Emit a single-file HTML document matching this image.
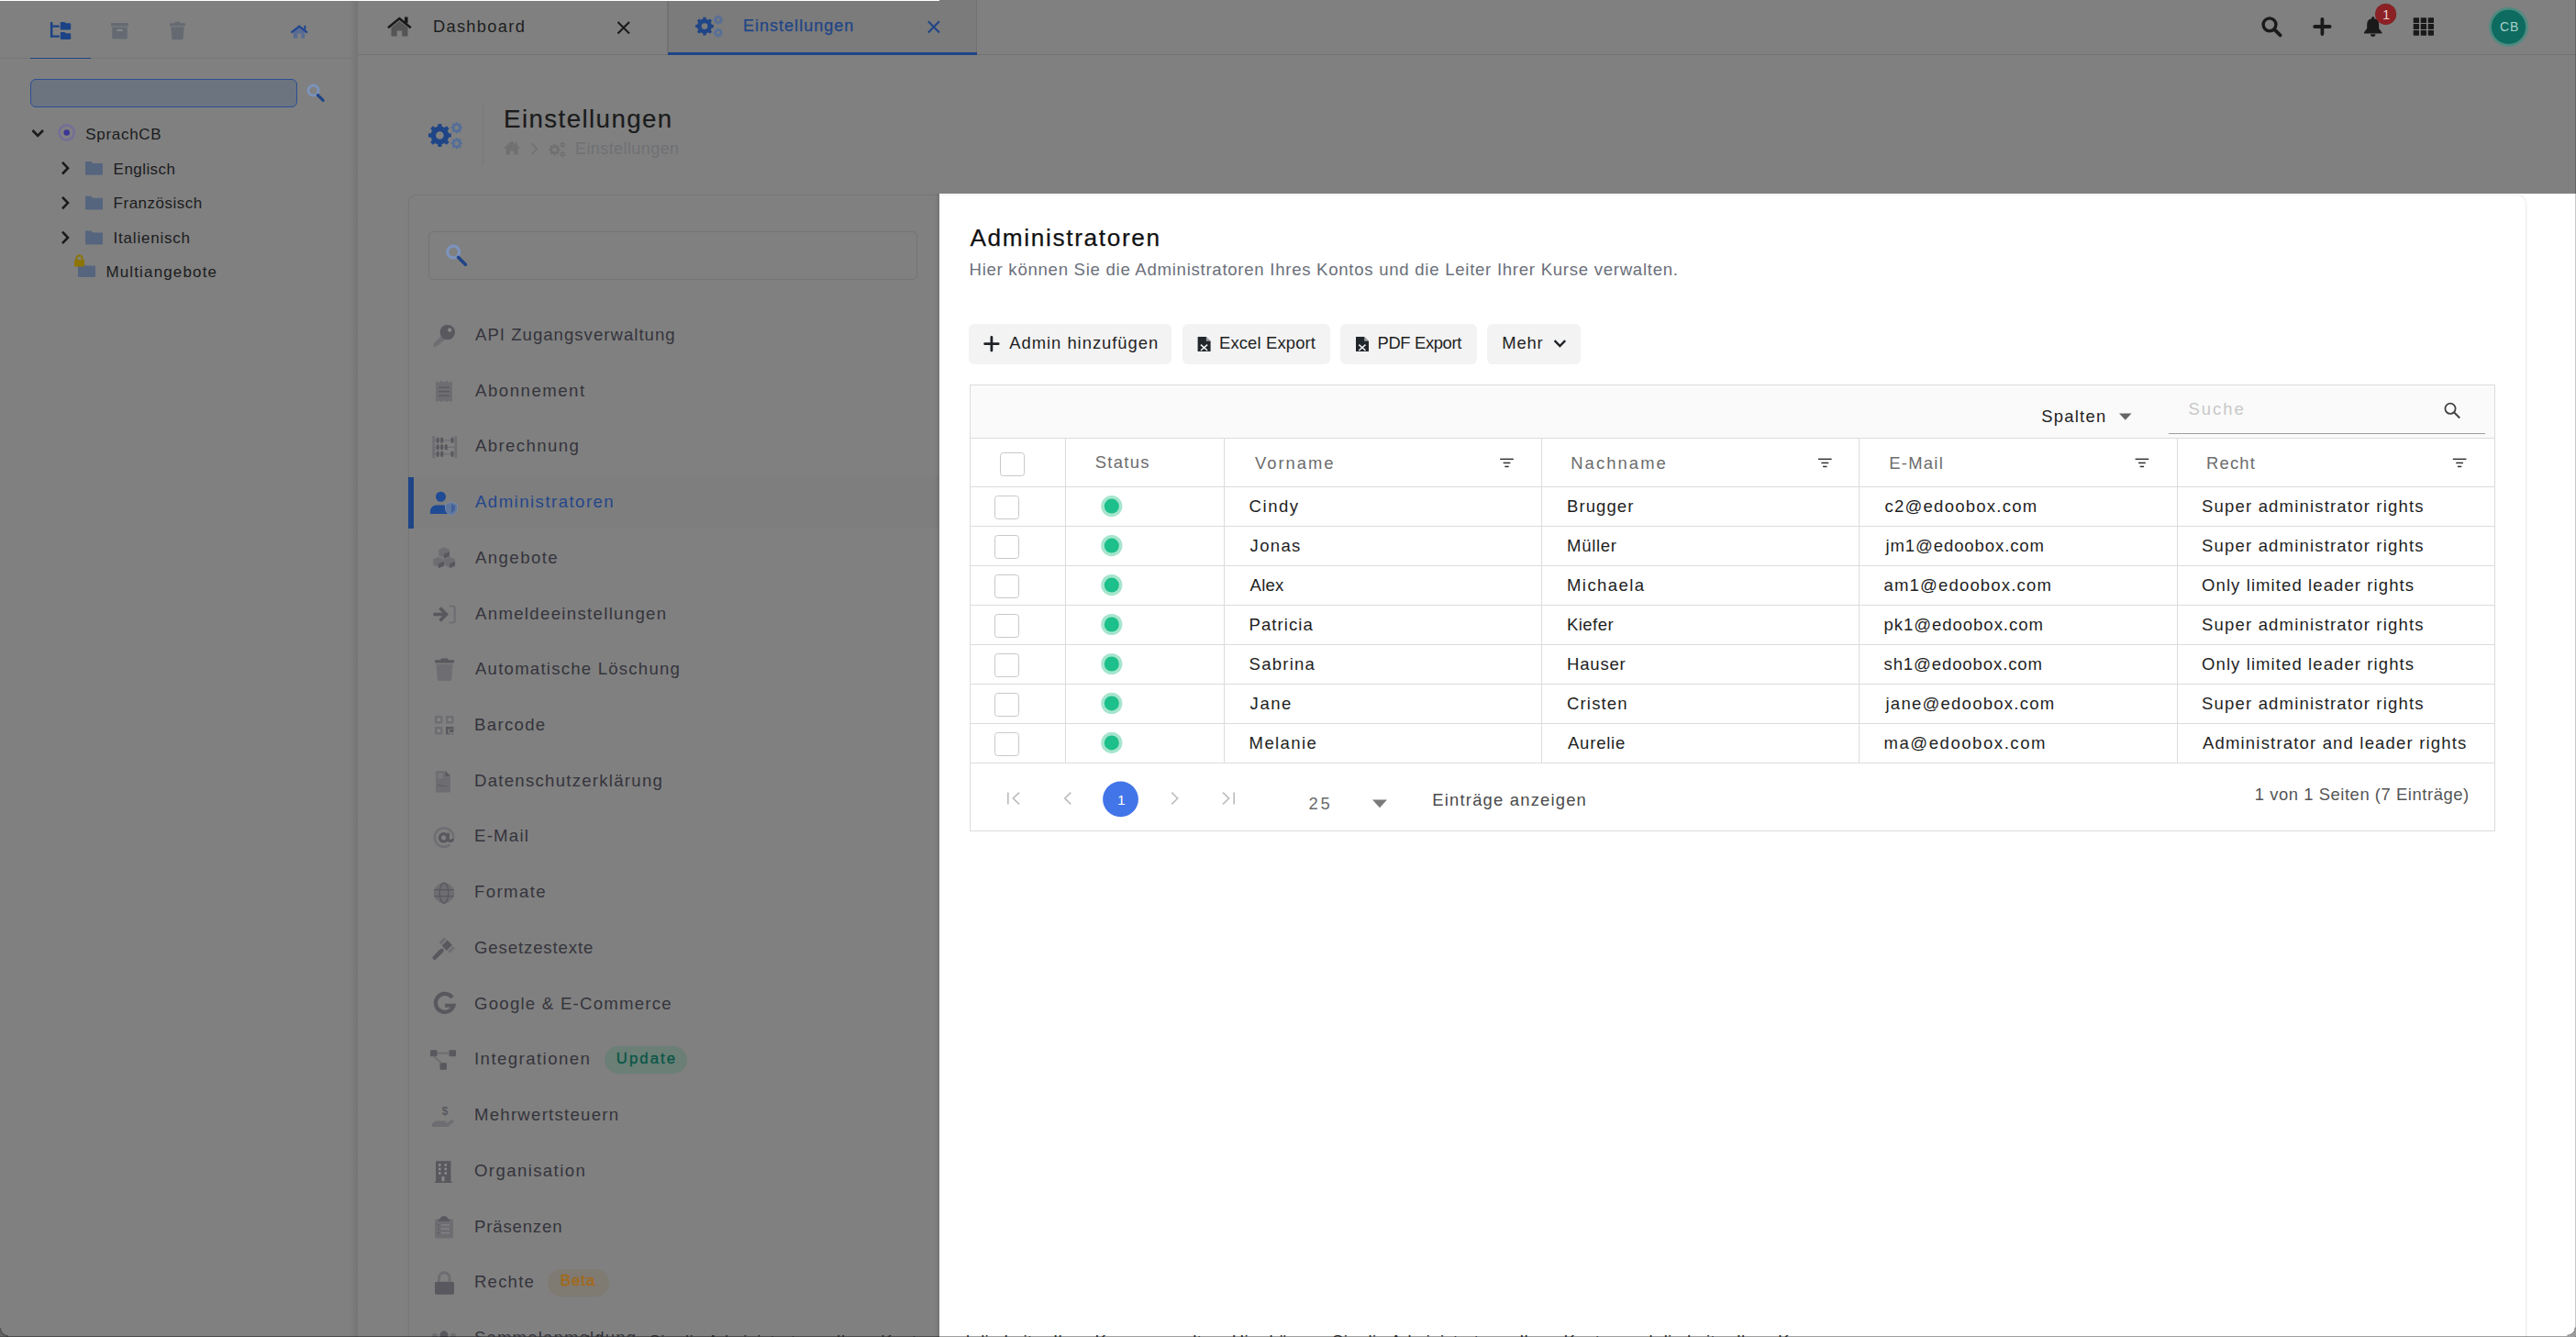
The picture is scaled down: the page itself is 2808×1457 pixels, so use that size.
<!DOCTYPE html>
<html><head><meta charset="utf-8"><style>
html,body{margin:0;padding:0;}
body{width:2808px;height:1457px;overflow:hidden;position:relative;background:#808080;font-family:"Liberation Sans", sans-serif;}
.t{position:absolute;white-space:nowrap;font-family:"Liberation Sans", sans-serif;}
svg{display:block;overflow:visible}
</style></head><body>
<div style='position:absolute;left:381px;top:0px;width:9px;height:1457px;background:linear-gradient(90deg,rgba(0,0,0,0),rgba(0,0,0,0.09))'></div><div style='position:absolute;left:0px;top:63px;width:390px;height:1px;background:#737778'></div><div style='position:absolute;left:33px;top:63px;width:66px;height:1px;background:#1f4585'></div><div style='position:absolute;left:390px;top:59px;width:2418px;height:1px;background:#727272'></div><div style='position:absolute;left:728px;top:0px;width:337px;height:57px;background:#7b7b7b;border-left:1px solid #727272;border-right:1px solid #727272;box-sizing:border-box'></div><div style='position:absolute;left:728px;top:57px;width:337px;height:3px;background:#1f4587'></div><svg style='position:absolute;left:0;top:0' width='2808' height='1457'><g fill='#1c4385'><rect x='54.9' y='23.9' width='2.5' height='16.9' rx='0.6'/><rect x='54.9' y='27.6' width='9.9' height='2.2' rx='0.6'/><rect x='54.9' y='38.5' width='9.9' height='2.2' rx='0.6'/><path d='M66.8,24 h3.6 l1.4,1.3 h4.4 a1,1 0 0 1 1,1 v5.1 a1,1 0 0 1 -1,1 h-9.4 a1,1 0 0 1 -1,-1 v-6.4 a1,1 0 0 1 1,-1z'/><path d='M66.8,35 h3.6 l1.4,1.3 h4.4 a1,1 0 0 1 1,1 v4.7 a1,1 0 0 1 -1,1 h-9.4 a1,1 0 0 1 -1,-1 v-6 a1,1 0 0 1 1,-1z'/></g></svg><svg style='position:absolute;left:0;top:0' width='2808' height='1457'><g fill='#656a72'><rect x='121' y='25' width='19' height='3.6' rx='0.8'/><path d='M122.2,29.6 h16.6 v11.6 a1.2,1.2 0 0 1 -1.2,1.2 h-14.2 a1.2,1.2 0 0 1 -1.2,-1.2z'/></g><rect x='127.5' y='32.2' width='6' height='1.6' fill='#8a8f96'/></svg><svg style='position:absolute;left:0;top:0' width='2808' height='1457'><g fill='#656a72'><rect x='185' y='25.3' width='17' height='3' rx='0.8'/><rect x='190.5' y='23.8' width='6' height='2' rx='0.8'/><path d='M186.3,29.2 h14.4 l-1,12.6 a1.6,1.6 0 0 1 -1.6,1.4 h-9.2 a1.6,1.6 0 0 1 -1.6,-1.4z'/></g></svg><svg style='position:absolute;left:0;top:0' width='2808' height='1457'><path fill='#586c93' d='M319.8,34.2 L326.1,29.4 L332.2,34.2 V41.8 H328.3 V36.6 H324.4 V41.8 H319.8Z'/><path d='M317.4,35.6 L326.2,28.6 L335,35.6' fill='none' stroke='#1f4590' stroke-width='2'/><rect x='331.4' y='27.8' width='2' height='4.6' fill='#1f4590'/></svg><div style='position:absolute;left:33px;top:86px;width:291px;height:31px;background:#6c7480;border:1.5px solid #2a4f94;border-radius:6px;box-sizing:border-box'></div><svg style='position:absolute;left:0;top:0' width='2808' height='1457'><circle cx='341.6' cy='98.6' r='5.6' fill='none' stroke='#7b93bd' stroke-width='2.8'/><path d='M346.4,103.6 L352.2,109.4' stroke='#1f4587' stroke-width='3.2' stroke-linecap='round'/></svg><svg style='position:absolute;left:0;top:0;pointer-events:none' width='2808' height='1457'><path d='M35.5,142 L41.2,147.8 L47,142' fill='none' stroke='#1a1a1a' stroke-width='2.6' /></svg><svg style='position:absolute;left:0;top:0' width='2808' height='1457'><circle cx='72.7' cy='144.5' r='8.1' fill='none' stroke='#766e96' stroke-width='2.6'/><circle cx='72.7' cy='144.5' r='3.3' fill='#3d3597'/></svg><svg style='position:absolute;left:0;top:0;pointer-events:none' width='2808' height='1457'><path d='M68,176.89999999999998 L74,183.2 L68,189.5' fill='none' stroke='#1a1a1a' stroke-width='2.6' /></svg><svg style='position:absolute;left:0;top:0' width='2808' height='1457'><path fill='#56657e' d='M93,175.89999999999998 h6.5 l2,2 h10.5 v11.8 a1,1 0 0 1 -1,1 h-17 a1,1 0 0 1 -1,-1z'/></svg><svg style='position:absolute;left:0;top:0;pointer-events:none' width='2808' height='1457'><path d='M68,214.79999999999998 L74,221.1 L68,227.4' fill='none' stroke='#1a1a1a' stroke-width='2.6' /></svg><svg style='position:absolute;left:0;top:0' width='2808' height='1457'><path fill='#56657e' d='M93,213.79999999999998 h6.5 l2,2 h10.5 v11.8 a1,1 0 0 1 -1,1 h-17 a1,1 0 0 1 -1,-1z'/></svg><svg style='position:absolute;left:0;top:0;pointer-events:none' width='2808' height='1457'><path d='M68,252.59999999999997 L74,258.9 L68,265.2' fill='none' stroke='#1a1a1a' stroke-width='2.6' /></svg><svg style='position:absolute;left:0;top:0' width='2808' height='1457'><path fill='#56657e' d='M93,251.59999999999997 h6.5 l2,2 h10.5 v11.8 a1,1 0 0 1 -1,1 h-17 a1,1 0 0 1 -1,-1z'/></svg><svg style='position:absolute;left:0;top:0' width='2808' height='1457'><path fill='#56657e' d='M85,287.6 h6.5 l2,2 h10.5 v11.4 a1,1 0 0 1 -1,1 h-17 a1,1 0 0 1 -1,-1z'/></svg><svg style='position:absolute;left:0;top:0' width='2808' height='1457'><rect x='81' y='283' width='11' height='7.5' rx='1' fill='#8c7400'/><path d='M83.3,283.5 v-1.8 a3.2,3.2 0 0 1 6.4,0 v1.8' fill='none' stroke='#8c7400' stroke-width='1.9'/></svg><svg style='position:absolute;left:0;top:0' width='2808' height='1457'><circle cx='2474' cy='26.8' r='6.9' fill='none' stroke='#1a1a1a' stroke-width='3.4'/><path d='M2479.5,32.3 L2485.6,38.4' stroke='#1a1a1a' stroke-width='3.8' stroke-linecap='round'/></svg><svg style='position:absolute;left:0;top:0' width='2808' height='1457'><path d='M2531.4,20.8 V37.1 M2523.2,29 H2539.6' stroke='#1a1a1a' stroke-width='3.8' stroke-linecap='round'/></svg><svg style='position:absolute;left:0;top:0' width='2808' height='1457'><path fill='#1a1a1a' d='M2586.7,18 a1.5,1.5 0 0 1 1.5,1.5 v0.8 a6.2,6.2 0 0 1 5,6.1 v4.5 l3.2,4.3 v1.2 h-19.4 v-1.2 l3.2,-4.3 v-4.5 a6.2,6.2 0 0 1 5,-6.1 v-0.8 a1.5,1.5 0 0 1 1.5,-1.5z M2584,37.2 h5.4 a2.7,2.7 0 0 1 -5.4,0z'/></svg><svg style='position:absolute;left:0;top:0' width='2808' height='1457'><circle cx='2600.6' cy='15.4' r='11.5' fill='#8c2125'/><circle cx='2600.6' cy='15.4' r='11.5' fill='none' stroke='rgba(0,0,0,0.08)' stroke-width='1'/></svg><svg style='position:absolute;left:0;top:0' width='2808' height='1457'><g fill='#1a1a1a'><rect x='2630.7' y='19.3' width='6.3' height='5.8' rx='0.6'/><rect x='2630.7' y='26.1' width='6.3' height='5.8' rx='0.6'/><rect x='2630.7' y='32.9' width='6.3' height='5.8' rx='0.6'/><rect x='2638.7' y='19.3' width='6.3' height='5.8' rx='0.6'/><rect x='2638.7' y='26.1' width='6.3' height='5.8' rx='0.6'/><rect x='2638.7' y='32.9' width='6.3' height='5.8' rx='0.6'/><rect x='2646.7' y='19.3' width='6.3' height='5.8' rx='0.6'/><rect x='2646.7' y='26.1' width='6.3' height='5.8' rx='0.6'/><rect x='2646.7' y='32.9' width='6.3' height='5.8' rx='0.6'/></g></svg><svg style='position:absolute;left:0;top:0' width='2808' height='1457'><circle cx='2734.5' cy='29.3' r='21.5' fill='#4f8a81'/><circle cx='2734.5' cy='29.3' r='18.6' fill='#0d6b5f'/></svg><svg style='position:absolute;left:0;top:0' width='2808' height='1457'><path fill='#555' d='M426.5,30 L435.4,23 L444.5,30 V39.6 H438.2 V33.5 H432.7 V39.6 H426.5Z'/><path d='M423,30.3 L435.4,20.2 L447.8,30.3' fill='none' stroke='#1a1a1a' stroke-width='2.6'/><rect x='441' y='18.5' width='3.6' height='6.5' fill='#1a1a1a'/></svg><svg style='position:absolute;left:0;top:0;pointer-events:none' width='2808' height='1457'><path d='M673.5,24 L686,36.5 M686,24 L673.5,36.5' fill='none' stroke='#1a1a1a' stroke-width='2.1' /></svg><div style='position:absolute;left:727px;top:0px;width:1px;height:57px;background:#747474'></div><svg style='position:absolute;left:0;top:0' width='2808' height='1457'><path fill-rule='evenodd' fill='#1f4587' d='M766.25,20.79 L766.44,18.72 L769.56,18.72 L769.75,20.79 L772.29,21.85 L773.88,20.51 L776.09,22.72 L774.75,24.31 L775.81,26.85 L777.88,27.04 L777.88,30.16 L775.81,30.35 L774.75,32.89 L776.09,34.48 L773.88,36.69 L772.29,35.35 L769.75,36.41 L769.56,38.48 L766.44,38.48 L766.25,36.41 L763.71,35.35 L762.12,36.69 L759.91,34.48 L761.25,32.89 L760.19,30.35 L758.12,30.16 L758.12,27.04 L760.19,26.85 L761.25,24.31 L759.91,22.72 L762.12,20.51 L763.71,21.85Z M771.40,28.60 A3.4,3.4 0 1,0 764.60,28.60 A3.4,3.4 0 1,0 771.40,28.60Z'/></svg><svg style='position:absolute;left:0;top:0' width='2808' height='1457'><path fill-rule='evenodd' fill='#556e98' d='M782.01,17.60 L782.09,16.46 L783.71,16.46 L783.79,17.60 L785.10,18.14 L785.96,17.39 L787.11,18.54 L786.36,19.40 L786.90,20.71 L788.04,20.79 L788.04,22.41 L786.90,22.49 L786.36,23.80 L787.11,24.66 L785.96,25.81 L785.10,25.06 L783.79,25.60 L783.71,26.74 L782.09,26.74 L782.01,25.60 L780.70,25.06 L779.84,25.81 L778.69,24.66 L779.44,23.80 L778.90,22.49 L777.76,22.41 L777.76,20.79 L778.90,20.71 L779.44,19.40 L778.69,18.54 L779.84,17.39 L780.70,18.14Z M784.70,21.60 A1.8,1.8 0 1,0 781.10,21.60 A1.8,1.8 0 1,0 784.70,21.60Z'/></svg><svg style='position:absolute;left:0;top:0' width='2808' height='1457'><path fill-rule='evenodd' fill='#556e98' d='M782.01,31.60 L782.09,30.46 L783.71,30.46 L783.79,31.60 L785.10,32.14 L785.96,31.39 L787.11,32.54 L786.36,33.40 L786.90,34.71 L788.04,34.79 L788.04,36.41 L786.90,36.49 L786.36,37.80 L787.11,38.66 L785.96,39.81 L785.10,39.06 L783.79,39.60 L783.71,40.74 L782.09,40.74 L782.01,39.60 L780.70,39.06 L779.84,39.81 L778.69,38.66 L779.44,37.80 L778.90,36.49 L777.76,36.41 L777.76,34.79 L778.90,34.71 L779.44,33.40 L778.69,32.54 L779.84,31.39 L780.70,32.14Z M784.70,35.60 A1.8,1.8 0 1,0 781.10,35.60 A1.8,1.8 0 1,0 784.70,35.60Z'/></svg><svg style='position:absolute;left:0;top:0;pointer-events:none' width='2808' height='1457'><path d='M1011.8,23.2 L1024,35.4 M1024,23.2 L1011.8,35.4' fill='none' stroke='#1f4587' stroke-width='2.1' /></svg><svg style='position:absolute;left:0;top:0' width='2808' height='1457'><path fill-rule='evenodd' fill='#1f4587' d='M477.22,137.74 L477.43,135.06 L481.37,135.06 L481.58,137.74 L484.76,139.06 L486.81,137.31 L489.59,140.09 L487.84,142.14 L489.16,145.32 L491.84,145.53 L491.84,149.47 L489.16,149.68 L487.84,152.86 L489.59,154.91 L486.81,157.69 L484.76,155.94 L481.58,157.26 L481.37,159.94 L477.43,159.94 L477.22,157.26 L474.04,155.94 L471.99,157.69 L469.21,154.91 L470.96,152.86 L469.64,149.68 L466.96,149.47 L466.96,145.53 L469.64,145.32 L470.96,142.14 L469.21,140.09 L471.99,137.31 L474.04,139.06Z M483.70,147.50 A4.3,4.3 0 1,0 475.10,147.50 A4.3,4.3 0 1,0 483.70,147.50Z'/></svg><svg style='position:absolute;left:0;top:0' width='2808' height='1457'><path fill-rule='evenodd' fill='#556e98' d='M496.71,134.32 L496.80,132.88 L498.80,132.88 L498.89,134.32 L500.48,134.98 L501.56,134.02 L502.98,135.44 L502.02,136.52 L502.68,138.11 L504.12,138.20 L504.12,140.20 L502.68,140.29 L502.02,141.88 L502.98,142.96 L501.56,144.38 L500.48,143.42 L498.89,144.08 L498.80,145.52 L496.80,145.52 L496.71,144.08 L495.12,143.42 L494.04,144.38 L492.62,142.96 L493.58,141.88 L492.92,140.29 L491.48,140.20 L491.48,138.20 L492.92,138.11 L493.58,136.52 L492.62,135.44 L494.04,134.02 L495.12,134.98Z M500.00,139.20 A2.2,2.2 0 1,0 495.60,139.20 A2.2,2.2 0 1,0 500.00,139.20Z'/></svg><svg style='position:absolute;left:0;top:0' width='2808' height='1457'><path fill-rule='evenodd' fill='#556e98' d='M496.71,151.32 L496.80,149.88 L498.80,149.88 L498.89,151.32 L500.48,151.98 L501.56,151.02 L502.98,152.44 L502.02,153.52 L502.68,155.11 L504.12,155.20 L504.12,157.20 L502.68,157.29 L502.02,158.88 L502.98,159.96 L501.56,161.38 L500.48,160.42 L498.89,161.08 L498.80,162.52 L496.80,162.52 L496.71,161.08 L495.12,160.42 L494.04,161.38 L492.62,159.96 L493.58,158.88 L492.92,157.29 L491.48,157.20 L491.48,155.20 L492.92,155.11 L493.58,153.52 L492.62,152.44 L494.04,151.02 L495.12,151.98Z M500.00,156.20 A2.2,2.2 0 1,0 495.60,156.20 A2.2,2.2 0 1,0 500.00,156.20Z'/></svg><div style='position:absolute;left:526px;top:115px;width:1px;height:65px;background:#76797c'></div><svg style='position:absolute;left:0;top:0' width='2808' height='1457'><path fill='#707070' d='M551.5,161 L558,156 L564.5,161 V168.6 H560 V164.5 H556 V168.6 H551.5Z'/><path d='M549.6,161.6 L558,155 L566.2,161.6' fill='none' stroke='#707070' stroke-width='1.8'/><rect x='562' y='154.8' width='1.8' height='4' fill='#707070'/></svg><svg style='position:absolute;left:0;top:0;pointer-events:none' width='2808' height='1457'><path d='M579.5,156.2 L585.2,162.2 L579.5,168.2' fill='none' stroke='#707070' stroke-width='1.6' /></svg><svg style='position:absolute;left:0;top:0' width='2808' height='1457'><path fill-rule='evenodd' fill='#707070' d='M603.41,158.32 L603.51,156.98 L605.49,156.98 L605.59,158.32 L607.18,158.98 L608.20,158.10 L609.60,159.50 L608.72,160.52 L609.38,162.11 L610.72,162.21 L610.72,164.19 L609.38,164.29 L608.72,165.88 L609.60,166.90 L608.20,168.30 L607.18,167.42 L605.59,168.08 L605.49,169.42 L603.51,169.42 L603.41,168.08 L601.82,167.42 L600.80,168.30 L599.40,166.90 L600.28,165.88 L599.62,164.29 L598.28,164.19 L598.28,162.21 L599.62,162.11 L600.28,160.52 L599.40,159.50 L600.80,158.10 L601.82,158.98Z M606.80,163.20 A2.3,2.3 0 1,0 602.20,163.20 A2.3,2.3 0 1,0 606.80,163.20Z'/></svg><svg style='position:absolute;left:0;top:0' width='2808' height='1457'><path fill-rule='evenodd' fill='#707070' d='M612.64,155.60 L612.63,154.67 L613.97,154.67 L613.96,155.60 L614.87,156.12 L615.68,155.66 L616.34,156.81 L615.54,157.27 L615.54,158.33 L616.34,158.79 L615.68,159.94 L614.87,159.48 L613.96,160.00 L613.97,160.93 L612.63,160.93 L612.64,160.00 L611.73,159.48 L610.92,159.94 L610.26,158.79 L611.06,158.33 L611.06,157.27 L610.26,156.81 L610.92,155.66 L611.73,156.12Z M614.30,157.80 A1.0,1.0 0 1,0 612.30,157.80 A1.0,1.0 0 1,0 614.30,157.80Z'/></svg><svg style='position:absolute;left:0;top:0' width='2808' height='1457'><path fill-rule='evenodd' fill='#707070' d='M612.64,165.80 L612.63,164.87 L613.97,164.87 L613.96,165.80 L614.87,166.32 L615.68,165.86 L616.34,167.01 L615.54,167.47 L615.54,168.53 L616.34,168.99 L615.68,170.14 L614.87,169.68 L613.96,170.20 L613.97,171.13 L612.63,171.13 L612.64,170.20 L611.73,169.68 L610.92,170.14 L610.26,168.99 L611.06,168.53 L611.06,167.47 L610.26,167.01 L610.92,165.86 L611.73,166.32Z M614.30,168.00 A1.0,1.0 0 1,0 612.30,168.00 A1.0,1.0 0 1,0 614.30,168.00Z'/></svg><div style='position:absolute;left:444.5px;top:212px;width:700px;height:1400px;border:1px solid #777;border-radius:9px;box-sizing:border-box;box-shadow:0 0 3px rgba(0,0,0,0.03)'></div><div style='position:absolute;left:467px;top:252px;width:533px;height:53px;border:1px solid #747474;border-radius:5px;box-sizing:border-box'></div><svg style='position:absolute;left:0;top:0' width='2808' height='1457'><circle cx='494.2' cy='274.6' r='6.4' fill='none' stroke='#7b93bd' stroke-width='3.2'/><path d='M499.6,280.4 L507.4,288.2' stroke='#1f4587' stroke-width='3.6' stroke-linecap='round'/></svg><div style='position:absolute;left:451px;top:520px;width:573px;height:56px;background:rgba(0,0,0,0.012)'></div><div style='position:absolute;left:445px;top:520px;width:6px;height:56px;background:#1f4587'></div><div style='position:absolute;left:659px;top:1140px;width:90px;height:30px;border-radius:15px;background:#6b7f76'></div><div style='position:absolute;left:597px;top:1383px;width:67px;height:30px;border-radius:15px;background:#7f7a72'></div><svg style='position:absolute;left:0;top:0' width='2808' height='1457'><path fill='#6e6e72' d='M472.5,374.4 L481.5,365.4 L485.5,369.4 L482.5,372.4 h-2 v2 h-2 v2 h-2.5 l-1.5,1.5 h-2z'/><circle cx='487.8' cy='362.09999999999997' r='8.2' fill='#58585e'/><circle cx='490.2' cy='359.7' r='2.1' fill='#8a8a8c'/></svg><svg style='position:absolute;left:0;top:0' width='2808' height='1457'><path fill='#6e6e72' d='M475,414.81999999999994 l3,2 l3,-2 l3,2 l3,-2 l3,2 l3,-2 v23.6 l-3,-2 l-3,2 l-3,-2 l-3,2 l-3,-2 l-3,2z'/><g stroke='#58585e' stroke-width='1.3'><path d='M478,422.11999999999995 h12 M478,426.61999999999995 h12 M478,431.11999999999995 h12'/></g></svg><svg style='position:absolute;left:0;top:0' width='2808' height='1457'><g fill='#6e6e72'><rect x='471.3' y='475.34' width='2.8' height='24' rx='1'/><rect x='495.4' y='475.34' width='2.8' height='24' rx='1'/></g><g stroke='#6e6e72' stroke-width='1.3'><path d='M474,479.84 h21.4 M474,487.34 h21.4 M474,494.84 h21.4'/></g><g fill='#58585e'><rect x='475.7' y='476.84' width='2.9' height='6' rx='1.2'/><rect x='480.2' y='476.84' width='2.9' height='6' rx='1.2'/><rect x='491.5' y='476.84' width='2.9' height='6' rx='1.2'/><rect x='475.7' y='484.34' width='2.9' height='6' rx='1.2'/><rect x='480.2' y='484.34' width='2.9' height='6' rx='1.2'/><rect x='484.8' y='484.34' width='2.9' height='6' rx='1.2'/><rect x='475.7' y='491.84' width='2.9' height='6' rx='1.2'/><rect x='480.2' y='491.84' width='2.9' height='6' rx='1.2'/><rect x='491.5' y='491.84' width='2.9' height='6' rx='1.2'/></g></svg><svg style='position:absolute;left:0;top:0' width='2808' height='1457'><circle cx='480.5' cy='541.2600000000001' r='5.5' fill='#1f4a94'/><path fill='#1f4a94' d='M469,560.0600000000001 v-3 a6.5,6.5 0 0 1 6.5,-6.5 h10 a6,6 0 0 1 3,0.8 v8.7z'/><path fill='#5f769e' stroke='#7f8ea8' stroke-width='0.8' d='M492,547.0600000000001 l6.5,2.5 v4.5 c0,4 -3,6.5 -6.5,8 c-3.5,-1.5 -6.5,-4 -6.5,-8 v-4.5z'/><path fill='#1f4a94' d='M492,549.5600000000001 l3.8,1.5 v2.8 c0,2.4 -1.8,3.9 -3.8,4.8z' opacity='0.5'/></svg><svg style='position:absolute;left:0;top:0' width='2808' height='1457'><g fill='#6e6e72' stroke='#7a7a7c' stroke-width='0.6'><path d='M478,598.78 l6,-2.5 l6,2.5 v6.5 l-6,2.5 l-6,-2.5z'/><path d='M472,609.28 l6,-2.5 l6,2.5 v6.5 l-6,2.5 l-6,-2.5z'/><path d='M484,609.28 l6,-2.5 l6,2.5 v6.5 l-6,2.5 l-6,-2.5z'/></g><g fill='#58585e'><path d='M484,603.78 l6,-2.5 v5 l-6,2.5z'/><path d='M478,614.28 l6,-2.5 v5 l-6,2.5z'/><path d='M490,614.28 l6,-2.5 v5 l-6,2.5z'/></g></svg><svg style='position:absolute;left:0;top:0' width='2808' height='1457'><path d='M472.5,669.5 h12.5' stroke='#58585e' stroke-width='3.6'/><path d='M479.5,662.5 l7,7 l-7,7' fill='none' stroke='#58585e' stroke-width='3.6'/><path d='M489.5,660.5 h4 a2.2,2.2 0 0 1 2.2,2.2 v13.6 a2.2,2.2 0 0 1 -2.2,2.2 h-4' fill='none' stroke='#6e6e72' stroke-width='2.2'/></svg><svg style='position:absolute;left:0;top:0' width='2808' height='1457'><g fill='#58585e'><rect x='474' y='719.22' width='21' height='3.4' rx='1'/><rect x='480.5' y='717.62' width='8' height='2.2' rx='0.8'/></g><path fill='#6e6e72' d='M475.5,723.72 h18 l-1.3,16.5 a2,2 0 0 1 -2,1.8 h-11.4 a2,2 0 0 1 -2,-1.8z'/></svg><svg style='position:absolute;left:0;top:0' width='2808' height='1457'><g fill='#6e6e72'><rect x='474' y='779.94' width='8.5' height='8.5'/><rect x='486' y='779.94' width='8.5' height='8.5'/><rect x='474' y='791.94' width='8.5' height='8.5'/></g><g fill='#858587'><rect x='476.5' y='782.44' width='3.5' height='3.5'/><rect x='488.5' y='782.44' width='3.5' height='3.5'/><rect x='476.5' y='794.44' width='3.5' height='3.5'/></g><g fill='#58585e'><rect x='486' y='791.94' width='2.5' height='8.5'/><rect x='486' y='791.94' width='8.5' height='2.5'/><rect x='490' y='794.94' width='4.5' height='3'/><rect x='489' y='798.94' width='1.5' height='1.5'/><rect x='492.5' y='798.94' width='1.5' height='1.5'/></g></svg><svg style='position:absolute;left:0;top:0' width='2808' height='1457'><path fill='#6e6e72' d='M475,840.3600000000001 h10.5 l5.5,5.5 v16.5 a1.2,1.2 0 0 1 -1.2,1.2 h-14.8 z'/><path fill='#58585e' d='M485.5,840.3600000000001 l5.5,5.5 h-5.5z'/><g stroke='#858587' stroke-width='1.1'><path d='M477.5,844.1600000000001 h5 M477.5,847.1600000000001 h5'/></g><path d='M477,856.6600000000001 l2,-2 l1.5,2.2 l1.5,-1.2 l1.2,1 h4' fill='none' stroke='#58585e' stroke-width='1'/></svg><svg style='position:absolute;left:0;top:0' width='2808' height='1457'><path d='M490.5,920.5800000000002 A10.2,10.2 0 1 1 494.2,913.8800000000001' fill='none' stroke='#6e6e72' stroke-width='2.6'/><circle cx='483.6' cy='912.7800000000001' r='4.2' fill='none' stroke='#58585e' stroke-width='3.2'/><path d='M488.6,907.7800000000001 v6.2 a2.5,2.5 0 0 0 5,0' fill='none' stroke='#58585e' stroke-width='2.8'/></svg><svg style='position:absolute;left:0;top:0' width='2808' height='1457'><circle cx='484' cy='973.1000000000001' r='11.2' fill='#6e6e72'/><g fill='none' stroke='#58585e' stroke-width='1.4'><ellipse cx='484' cy='973.1000000000001' rx='4.8' ry='11'/><path d='M473,969.6000000000001 h22 M473,976.6000000000001 h22'/></g></svg><svg style='position:absolute;left:0;top:0' width='2808' height='1457'><path d='M473.8,1043.62 L481.5,1035.9199999999998' stroke='#58585e' stroke-width='4.6' stroke-linecap='round'/><path fill='#58585e' d='M481.54,1030.57 L487.55,1024.56 L492.86,1029.87 L486.85,1035.88Z'/><path fill='#6e6e72' d='M478.44,1027.12 L484.10,1021.46 L486.36,1023.72 L480.70,1029.38Z M488.04,1036.72 L493.70,1031.06 L495.96,1033.32 L490.30,1038.98Z'/></svg><svg style='position:absolute;left:0;top:0' width='2808' height='1457'><path d='M493,1087.04 A10,10 0 1 0 494.5,1095.74 H485' fill='none' stroke='#58585e' stroke-width='4.2'/></svg><svg style='position:absolute;left:0;top:0' width='2808' height='1457'><g fill='#58585e'><rect x='469' y='1144.26' width='7.5' height='7' rx='1'/><rect x='489.5' y='1144.26' width='7.5' height='7' rx='1'/><rect x='479.5' y='1158.26' width='7.5' height='7.5' rx='1'/></g><path d='M476.5,1147.76 h13 M473,1151.26 L481,1158.26' stroke='#6e6e72' stroke-width='2'/></svg><svg style='position:absolute;left:0;top:0' width='2808' height='1457'><text x='485' y='1215.48' font-family='Liberation Sans' font-weight='700' font-size='12' fill='#58585e' text-anchor='middle'>$</text><path fill='#6e6e72' d='M471,1224.48 c3,-3 6,-3.5 9,-3 h5 a1.5,1.5 0 0 1 0,3 h-4 h5 l6,-4 a1.8,1.8 0 0 1 2.2,2.6 l-6,5 h-17z'/></svg><svg style='position:absolute;left:0;top:0' width='2808' height='1457'><path fill='#58585e' d='M475,1265.2 h16.5 v22.5 h1.2 v1.3 h-19 v-1.3 h1.3z'/><rect x='478' y='1268.2' width='2.6' height='2.6' fill='#8a8a8c'/><rect x='478' y='1272.7' width='2.6' height='2.6' fill='#8a8a8c'/><rect x='478' y='1277.2' width='2.6' height='2.6' fill='#8a8a8c'/><rect x='484.5' y='1268.2' width='2.6' height='2.6' fill='#8a8a8c'/><rect x='484.5' y='1272.7' width='2.6' height='2.6' fill='#8a8a8c'/><rect x='484.5' y='1277.2' width='2.6' height='2.6' fill='#8a8a8c'/><rect x='481.5' y='1282.2' width='3' height='5' fill='#8a8a8c'/></svg><svg style='position:absolute;left:0;top:0' width='2808' height='1457'><path fill='#6e6e72' d='M475.5,1328.42 h17 a1.5,1.5 0 0 1 1.5,1.5 v18 a1.5,1.5 0 0 1 -1.5,1.5 h-17 a1.5,1.5 0 0 1 -1.5,-1.5 v-18 a1.5,1.5 0 0 1 1.5,-1.5z'/><path fill='#58585e' d='M480,1328.42 a4,3.2 0 0 1 8,0 h2 v2.5 h-12 v-2.5z'/><g stroke='#858587' stroke-width='1.3'><path d='M481,1334.92 h9 M481,1339.22 h9 M481,1343.6200000000001 h9'/></g><g fill='#555'><circle cx='477.8' cy='1334.92' r='0.8'/><circle cx='477.8' cy='1339.22' r='0.8'/><circle cx='477.8' cy='1343.6200000000001' r='0.8'/></g></svg><svg style='position:absolute;left:0;top:0' width='2808' height='1457'><rect x='474' y='1396.64' width='21' height='14' rx='2' fill='#58585e'/><path d='M478.5,1396.64 v-4 a5.8,5.8 0 0 1 11.6,0 v4' fill='none' stroke='#6e6e72' stroke-width='3'/></svg><svg style='position:absolute;left:0;top:0' width='2808' height='1457'><circle cx='484' cy='1454.8600000000001' r='4.5' fill='#58585e'/><circle cx='474' cy='1455.8600000000001' r='3' fill='#6e6e72'/><circle cx='494' cy='1455.8600000000001' r='3' fill='#6e6e72'/></svg><svg style='position:absolute;left:0;top:0' width='2808' height='1457'><path d='M0,1447 A9,9 0 0 0 9,1456 H0Z' fill='#686868'/><path d='M0,1447 A9,9 0 0 0 9,1456' fill='none' stroke='#525252' stroke-width='1.6'/></svg><div style='position:absolute;left:1019px;top:211px;width:5px;height:1246px;background:linear-gradient(90deg,rgba(0,0,0,0),rgba(0,0,0,0.10))'></div><div style='position:absolute;left:1024px;top:211px;width:1784px;height:1246px;background:#fff'></div><div style='position:absolute;left:1024px;top:212px;width:1730px;height:1400px;border:1px solid #efefef;border-left:none;border-radius:0 10px 0 0;box-sizing:border-box;box-shadow:1px 0 2px rgba(0,0,0,0.03)'></div><div style='position:absolute;left:1024px;top:211px;width:1px;height:1246px;background:#fff'></div><div style='position:absolute;left:2807px;top:0px;width:1px;height:1457px;background:rgba(0,0,0,0.22)'></div><div style='position:absolute;left:1056.2px;top:353px;width:221.3px;height:44px;background:#f3f3f3;border-radius:6px'></div><div style='position:absolute;left:1288.9px;top:353px;width:161.1px;height:44px;background:#f3f3f3;border-radius:6px'></div><div style='position:absolute;left:1461.2px;top:353px;width:148.4px;height:44px;background:#f3f3f3;border-radius:6px'></div><div style='position:absolute;left:1621.3px;top:353px;width:101.3px;height:44px;background:#f3f3f3;border-radius:6px'></div><svg style='position:absolute;left:0;top:0' width='2808' height='1457'><path d='M1080.9,367.5 V382 M1073.6,374.7 H1088.2' stroke='#1f2328' stroke-width='2.8' stroke-linecap='round'/></svg><svg style='position:absolute;left:0;top:0' width='2808' height='1457'><path fill='#22272c' d='M1305.6,367 h9.2 l4.8,4.8 v11.2 h-14z'/><path fill='#f3f3f3' d='M1314.8,367 v4.8 h4.8' opacity='0.6'/><path d='M1308.8999999999999,375.6 l7.2,6.4 M1316.1,375.6 l-7.2,6.4' stroke='#f3f3f3' stroke-width='1.5'/></svg><svg style='position:absolute;left:0;top:0' width='2808' height='1457'><path fill='#22272c' d='M1478,367 h9.2 l4.8,4.8 v11.2 h-14z'/><path fill='#f3f3f3' d='M1487.2,367 v4.8 h4.8' opacity='0.6'/><path d='M1481.3,375.6 l7.2,6.4 M1488.5,375.6 l-7.2,6.4' stroke='#f3f3f3' stroke-width='1.5'/></svg><svg style='position:absolute;left:0;top:0;pointer-events:none' width='2808' height='1457'><path d='M1694.6,371.2 L1700.4,377 L1706.2,371.2' fill='none' stroke='#1f2328' stroke-width='2.4' /></svg><div style='position:absolute;left:1056.5px;top:419px;width:1663.0px;height:486.5px;border:1px solid #dcdcdc;box-sizing:border-box'></div><div style='position:absolute;left:1057.5px;top:420px;width:1661.0px;height:57.5px;background:#fafafa'></div><div style='position:absolute;left:1056.5px;top:477px;width:1663.0px;height:1px;background:#dcdcdc'></div><svg style='position:absolute;left:0;top:0' width='2808' height='1457'><path d='M2310,450.5 h13.5 l-6.75,7.2z' fill='#666'/></svg><div style='position:absolute;left:2364.3px;top:471.8px;width:344.4px;height:1.2px;background:#9e9e9e'></div><svg style='position:absolute;left:0;top:0' width='2808' height='1457'><circle cx='2671' cy='445.3' r='5.6' fill='none' stroke='#444' stroke-width='1.8'/><path d='M2675,449.3 L2681.2,455.5' stroke='#444' stroke-width='2'/></svg><div style='position:absolute;left:1161px;top:477px;width:1px;height:354.3px;background:#dcdcdc'></div><div style='position:absolute;left:1334px;top:477px;width:1px;height:354.3px;background:#dcdcdc'></div><div style='position:absolute;left:1680px;top:477px;width:1px;height:354.3px;background:#dcdcdc'></div><div style='position:absolute;left:2026px;top:477px;width:1px;height:354.3px;background:#dcdcdc'></div><div style='position:absolute;left:2373px;top:477px;width:1px;height:354.3px;background:#dcdcdc'></div><div style='position:absolute;left:1056.5px;top:530px;width:1663.0px;height:1px;background:#dcdcdc'></div><div style='position:absolute;left:1056.5px;top:573px;width:1663.0px;height:1px;background:#dcdcdc'></div><div style='position:absolute;left:1056.5px;top:616px;width:1663.0px;height:1px;background:#dcdcdc'></div><div style='position:absolute;left:1056.5px;top:659px;width:1663.0px;height:1px;background:#dcdcdc'></div><div style='position:absolute;left:1056.5px;top:702px;width:1663.0px;height:1px;background:#dcdcdc'></div><div style='position:absolute;left:1056.5px;top:745px;width:1663.0px;height:1px;background:#dcdcdc'></div><div style='position:absolute;left:1056.5px;top:788px;width:1663.0px;height:1px;background:#dcdcdc'></div><div style='position:absolute;left:1056.5px;top:831px;width:1663.0px;height:1px;background:#dcdcdc'></div><div style='position:absolute;left:1090.3px;top:493.2px;width:26.3px;height:26.3px;border:1.2px solid #c8c8c8;border-radius:3.5px;box-sizing:border-box;background:#fff'></div><svg style='position:absolute;left:0;top:0' width='2808' height='1457'><g fill='#333'><rect x='1635.2' y='499.6' width='14.6' height='1.5'/><rect x='1638.6000000000001' y='503.7' width='7.8' height='1.5'/><rect x='1640.3' y='507.7' width='4.4' height='1.5'/></g></svg><svg style='position:absolute;left:0;top:0' width='2808' height='1457'><g fill='#333'><rect x='1982' y='499.6' width='14.6' height='1.5'/><rect x='1985.4' y='503.7' width='7.8' height='1.5'/><rect x='1987.1' y='507.7' width='4.4' height='1.5'/></g></svg><svg style='position:absolute;left:0;top:0' width='2808' height='1457'><g fill='#333'><rect x='2327.6' y='499.6' width='14.6' height='1.5'/><rect x='2331.0' y='503.7' width='7.8' height='1.5'/><rect x='2332.7' y='507.7' width='4.4' height='1.5'/></g></svg><svg style='position:absolute;left:0;top:0' width='2808' height='1457'><g fill='#333'><rect x='2673.8' y='499.6' width='14.6' height='1.5'/><rect x='2677.2000000000003' y='503.7' width='7.8' height='1.5'/><rect x='2678.9' y='507.7' width='4.4' height='1.5'/></g></svg><div style='position:absolute;left:1084.4px;top:540.10px;width:26.3px;height:26.3px;border:1.2px solid #c8c8c8;border-radius:3.5px;box-sizing:border-box;background:#fff'></div><svg style='position:absolute;left:0;top:0' width='2808' height='1457'><circle cx='1211.8' cy='551.60' r='11.6' fill='#a6e5cd'/><circle cx='1211.8' cy='551.60' r='8' fill='#1dbf8a'/></svg><div style='position:absolute;left:1084.4px;top:583.07px;width:26.3px;height:26.3px;border:1.2px solid #c8c8c8;border-radius:3.5px;box-sizing:border-box;background:#fff'></div><svg style='position:absolute;left:0;top:0' width='2808' height='1457'><circle cx='1211.8' cy='594.57' r='11.6' fill='#a6e5cd'/><circle cx='1211.8' cy='594.57' r='8' fill='#1dbf8a'/></svg><div style='position:absolute;left:1084.4px;top:626.04px;width:26.3px;height:26.3px;border:1.2px solid #c8c8c8;border-radius:3.5px;box-sizing:border-box;background:#fff'></div><svg style='position:absolute;left:0;top:0' width='2808' height='1457'><circle cx='1211.8' cy='637.54' r='11.6' fill='#a6e5cd'/><circle cx='1211.8' cy='637.54' r='8' fill='#1dbf8a'/></svg><div style='position:absolute;left:1084.4px;top:669.01px;width:26.3px;height:26.3px;border:1.2px solid #c8c8c8;border-radius:3.5px;box-sizing:border-box;background:#fff'></div><svg style='position:absolute;left:0;top:0' width='2808' height='1457'><circle cx='1211.8' cy='680.51' r='11.6' fill='#a6e5cd'/><circle cx='1211.8' cy='680.51' r='8' fill='#1dbf8a'/></svg><div style='position:absolute;left:1084.4px;top:711.98px;width:26.3px;height:26.3px;border:1.2px solid #c8c8c8;border-radius:3.5px;box-sizing:border-box;background:#fff'></div><svg style='position:absolute;left:0;top:0' width='2808' height='1457'><circle cx='1211.8' cy='723.48' r='11.6' fill='#a6e5cd'/><circle cx='1211.8' cy='723.48' r='8' fill='#1dbf8a'/></svg><div style='position:absolute;left:1084.4px;top:754.95px;width:26.3px;height:26.3px;border:1.2px solid #c8c8c8;border-radius:3.5px;box-sizing:border-box;background:#fff'></div><svg style='position:absolute;left:0;top:0' width='2808' height='1457'><circle cx='1211.8' cy='766.45' r='11.6' fill='#a6e5cd'/><circle cx='1211.8' cy='766.45' r='8' fill='#1dbf8a'/></svg><div style='position:absolute;left:1084.4px;top:797.92px;width:26.3px;height:26.3px;border:1.2px solid #c8c8c8;border-radius:3.5px;box-sizing:border-box;background:#fff'></div><svg style='position:absolute;left:0;top:0' width='2808' height='1457'><circle cx='1211.8' cy='809.42' r='11.6' fill='#a6e5cd'/><circle cx='1211.8' cy='809.42' r='8' fill='#1dbf8a'/></svg><svg style='position:absolute;left:0;top:0' width='2808' height='1457'><path d='M1098.8,863.6 V876.4 M1111,863.6 L1104.4,870 L1111,876.4' fill='none' stroke='#bdbdbd' stroke-width='1.7'/><path d='M1167.2,863.6 L1160.8,870 L1167.2,876.4' fill='none' stroke='#bdbdbd' stroke-width='1.7'/><path d='M1277.2,863.6 L1283.6,870 L1277.2,876.4' fill='none' stroke='#bdbdbd' stroke-width='1.7'/><path d='M1345.2,863.6 V876.4 M1333,863.6 L1339.6,870 L1333,876.4' fill='none' stroke='#bdbdbd' stroke-width='1.7'/></svg><svg style='position:absolute;left:0;top:0' width='2808' height='1457'><circle cx='1221.5' cy='870.9' r='19.4' fill='#4275e8'/></svg><svg style='position:absolute;left:0;top:0' width='2808' height='1457'><path d='M1496,871.6 h16 l-8,8.6z' fill='#7a7a7a'/></svg><div style='position:absolute;left:0px;top:0px;width:1024px;height:1px;background:#fff'></div><div style='position:absolute;left:0px;top:1456px;width:2808px;height:1px;background:rgba(0,0,0,0.38)'></div><svg style='position:absolute;left:0;top:0' width='2808' height='1457'><path d='M2808,1446.5 A9.5,9.5 0 0 1 2798.5,1456 H2808Z' fill='#9a9a9a'/><path d='M2807.4,1446.5 A9,9 0 0 1 2798.4,1455.5' fill='none' stroke='#8a8a8a' stroke-width='1.4'/></svg>
<div class=t style='left:93.20px;top:137.01px;font-size:17px;line-height:20.40px;color:#1b1b1d;letter-spacing:0.714px;font-weight:400;'>SprachCB</div><div class=t style='left:123.60px;top:175.01px;font-size:17px;line-height:20.40px;color:#1b1b1d;letter-spacing:0.443px;font-weight:400;'>Englisch</div><div class=t style='left:123.60px;top:211.81px;font-size:17px;line-height:20.40px;color:#1b1b1d;letter-spacing:0.500px;font-weight:400;'>Französisch</div><div class=t style='left:123.60px;top:249.81px;font-size:17px;line-height:20.40px;color:#1b1b1d;letter-spacing:0.780px;font-weight:400;'>Italienisch</div><div class=t style='left:115.40px;top:286.81px;font-size:17px;line-height:20.40px;color:#1b1b1d;letter-spacing:1.150px;font-weight:400;'>Multiangebote</div><div class=t style='left:2597.20px;top:8.25px;font-size:14px;line-height:16.80px;color:#ecd2d2;letter-spacing:0.000px;font-weight:400;'>1</div><div class=t style='left:2725.00px;top:20.65px;font-size:14px;line-height:16.80px;color:#a9cfc9;letter-spacing:1.000px;font-weight:400;'>CB</div><div class=t style='left:471.90px;top:18.28px;font-size:18.3px;line-height:21.96px;color:#1e1e1e;letter-spacing:1.312px;font-weight:400;'>Dashboard</div><div class=t style='left:809.90px;top:17.56px;font-size:18px;line-height:21.60px;color:#1f4587;letter-spacing:1.033px;font-weight:400;-webkit-text-stroke:0.25px #1f4587'>Einstellungen</div><div class=t style='left:549.00px;top:113.38px;font-size:27.7px;line-height:33.24px;color:#1b1b1b;letter-spacing:1.417px;font-weight:400;-webkit-text-stroke:0.2px #1b1b1b'>Einstellungen</div><div class=t style='left:627.00px;top:152.16px;font-size:18px;line-height:21.60px;color:#6f7074;letter-spacing:0.417px;font-weight:400;'>Einstellungen</div><div class=t style='left:518.00px;top:354.00px;font-size:18.6px;line-height:22.32px;color:#35343c;letter-spacing:1.010px;font-weight:400;'>API Zugangsverwaltung</div><div class=t style='left:518.00px;top:414.72px;font-size:18.6px;line-height:22.32px;color:#35343c;letter-spacing:1.522px;font-weight:400;'>Abonnement</div><div class=t style='left:518.00px;top:475.44px;font-size:18.6px;line-height:22.32px;color:#35343c;letter-spacing:1.389px;font-weight:400;'>Abrechnung</div><div class=t style='left:518.00px;top:536.16px;font-size:18.6px;line-height:22.32px;color:#24468a;letter-spacing:1.464px;font-weight:400;'>Administratoren</div><div class=t style='left:518.00px;top:596.88px;font-size:18.6px;line-height:22.32px;color:#35343c;letter-spacing:1.429px;font-weight:400;'>Angebote</div><div class=t style='left:518.00px;top:657.60px;font-size:18.6px;line-height:22.32px;color:#35343c;letter-spacing:1.321px;font-weight:400;'>Anmeldeeinstellungen</div><div class=t style='left:518.00px;top:718.32px;font-size:18.6px;line-height:22.32px;color:#35343c;letter-spacing:1.220px;font-weight:400;'>Automatische Löschung</div><div class=t style='left:517.00px;top:779.04px;font-size:18.6px;line-height:22.32px;color:#35343c;letter-spacing:1.317px;font-weight:400;'>Barcode</div><div class=t style='left:517.00px;top:839.76px;font-size:18.6px;line-height:22.32px;color:#35343c;letter-spacing:1.263px;font-weight:400;'>Datenschutzerklärung</div><div class=t style='left:517.00px;top:900.48px;font-size:18.6px;line-height:22.32px;color:#35343c;letter-spacing:1.240px;font-weight:400;'>E-Mail</div><div class=t style='left:517.00px;top:961.20px;font-size:18.6px;line-height:22.32px;color:#35343c;letter-spacing:1.383px;font-weight:400;'>Formate</div><div class=t style='left:517.00px;top:1021.92px;font-size:18.6px;line-height:22.32px;color:#35343c;letter-spacing:0.875px;font-weight:400;'>Gesetzestexte</div><div class=t style='left:517.00px;top:1082.64px;font-size:18.6px;line-height:22.32px;color:#35343c;letter-spacing:1.250px;font-weight:400;'>Google &amp; E-Commerce</div><div class=t style='left:517.00px;top:1143.36px;font-size:18.6px;line-height:22.32px;color:#35343c;letter-spacing:1.442px;font-weight:400;'>Integrationen</div><div class=t style='left:517.00px;top:1204.08px;font-size:18.6px;line-height:22.32px;color:#35343c;letter-spacing:1.250px;font-weight:400;'>Mehrwertsteuern</div><div class=t style='left:517.00px;top:1264.80px;font-size:18.6px;line-height:22.32px;color:#35343c;letter-spacing:1.391px;font-weight:400;'>Organisation</div><div class=t style='left:517.00px;top:1325.52px;font-size:18.6px;line-height:22.32px;color:#35343c;letter-spacing:0.825px;font-weight:400;'>Präsenzen</div><div class=t style='left:517.00px;top:1386.24px;font-size:18.6px;line-height:22.32px;color:#35343c;letter-spacing:1.180px;font-weight:400;'>Rechte</div><div class=t style='left:517.00px;top:1446.96px;font-size:18.6px;line-height:22.32px;color:#35343c;letter-spacing:1.129px;font-weight:400;'>Sammelanmeldung</div><div class=t style='left:671.80px;top:1144.39px;font-size:16.7px;line-height:20.04px;color:#0a5648;letter-spacing:2.080px;font-weight:400;-webkit-text-stroke:0.35px #0a5648'>Update</div><div class=t style='left:610.80px;top:1385.91px;font-size:17px;line-height:20.40px;color:#a26a1c;letter-spacing:0.833px;font-weight:400;-webkit-text-stroke:0.5px #a26a1c'>Beta</div><div class=t style='left:1057.50px;top:244.30px;font-size:26.2px;line-height:31.44px;color:#111111;letter-spacing:1.657px;font-weight:400;-webkit-text-stroke:0.25px #111'>Administratoren</div><div class=t style='left:1056.50px;top:283.30px;font-size:18.6px;line-height:22.32px;color:#6b6f7a;letter-spacing:0.722px;font-weight:400;'>Hier können Sie die Administratoren Ihres Kontos und die Leiter Ihrer Kurse verwalten.</div><div class=t style='left:1100.30px;top:362.78px;font-size:18.4px;line-height:22.08px;color:#1f1f1f;letter-spacing:0.980px;font-weight:400;'>Admin hinzufügen</div><div class=t style='left:1329.00px;top:362.78px;font-size:18.4px;line-height:22.08px;color:#1f1f1f;letter-spacing:0.155px;font-weight:400;'>Excel Export</div><div class=t style='left:1501.50px;top:362.78px;font-size:18.4px;line-height:22.08px;color:#1f1f1f;letter-spacing:-0.356px;font-weight:400;'>PDF Export</div><div class=t style='left:1637.30px;top:362.78px;font-size:18.4px;line-height:22.08px;color:#1f1f1f;letter-spacing:0.833px;font-weight:400;'>Mehr</div><div class=t style='left:2225.30px;top:442.98px;font-size:18.4px;line-height:22.08px;color:#222222;letter-spacing:1.250px;font-weight:400;'>Spalten</div><div class=t style='left:2385.50px;top:435.38px;font-size:18.4px;line-height:22.08px;color:#c8c8c8;letter-spacing:2.025px;font-weight:400;'>Suche</div><div class=t style='left:1193.70px;top:493.38px;font-size:18.4px;line-height:22.08px;color:#6c6c6c;letter-spacing:1.320px;font-weight:400;'>Status</div><div class=t style='left:1368.00px;top:493.88px;font-size:18.4px;line-height:22.08px;color:#6c6c6c;letter-spacing:1.967px;font-weight:400;'>Vorname</div><div class=t style='left:1712.20px;top:493.88px;font-size:18.4px;line-height:22.08px;color:#6c6c6c;letter-spacing:2.100px;font-weight:400;'>Nachname</div><div class=t style='left:2059.20px;top:493.58px;font-size:18.4px;line-height:22.08px;color:#6c6c6c;letter-spacing:1.300px;font-weight:400;'>E-Mail</div><div class=t style='left:2405.00px;top:493.88px;font-size:18.4px;line-height:22.08px;color:#6c6c6c;letter-spacing:1.200px;font-weight:400;'>Recht</div><div class=t style='left:1361.60px;top:541.09px;font-size:18.5px;line-height:22.20px;color:#1e1e1e;letter-spacing:1.550px;font-weight:400;'>Cindy</div><div class=t style='left:1708.00px;top:541.09px;font-size:18.5px;line-height:22.20px;color:#1e1e1e;letter-spacing:1.083px;font-weight:400;'>Brugger</div><div class=t style='left:2054.50px;top:541.09px;font-size:18.5px;line-height:22.20px;color:#1e1e1e;letter-spacing:1.254px;font-weight:400;'>c2@edoobox.com</div><div class=t style='left:2400.00px;top:541.09px;font-size:18.5px;line-height:22.20px;color:#1e1e1e;letter-spacing:1.188px;font-weight:400;'>Super administrator rights</div><div class=t style='left:1362.60px;top:584.06px;font-size:18.5px;line-height:22.20px;color:#1e1e1e;letter-spacing:1.350px;font-weight:400;'>Jonas</div><div class=t style='left:1708.00px;top:584.06px;font-size:18.5px;line-height:22.20px;color:#1e1e1e;letter-spacing:0.720px;font-weight:400;'>Müller</div><div class=t style='left:2055.50px;top:584.06px;font-size:18.5px;line-height:22.20px;color:#1e1e1e;letter-spacing:0.914px;font-weight:400;'>jm1@edoobox.com</div><div class=t style='left:2400.00px;top:584.06px;font-size:18.5px;line-height:22.20px;color:#1e1e1e;letter-spacing:1.188px;font-weight:400;'>Super administrator rights</div><div class=t style='left:1362.60px;top:627.03px;font-size:18.5px;line-height:22.20px;color:#1e1e1e;letter-spacing:0.233px;font-weight:400;'>Alex</div><div class=t style='left:1708.00px;top:627.03px;font-size:18.5px;line-height:22.20px;color:#1e1e1e;letter-spacing:1.429px;font-weight:400;'>Michaela</div><div class=t style='left:2053.50px;top:627.03px;font-size:18.5px;line-height:22.20px;color:#1e1e1e;letter-spacing:1.179px;font-weight:400;'>am1@edoobox.com</div><div class=t style='left:2400.00px;top:627.03px;font-size:18.5px;line-height:22.20px;color:#1e1e1e;letter-spacing:1.100px;font-weight:400;'>Only limited leader rights</div><div class=t style='left:1361.60px;top:670.00px;font-size:18.5px;line-height:22.20px;color:#1e1e1e;letter-spacing:1.057px;font-weight:400;'>Patricia</div><div class=t style='left:1708.00px;top:670.00px;font-size:18.5px;line-height:22.20px;color:#1e1e1e;letter-spacing:0.460px;font-weight:400;'>Kiefer</div><div class=t style='left:2053.50px;top:670.00px;font-size:18.5px;line-height:22.20px;color:#1e1e1e;letter-spacing:0.979px;font-weight:400;'>pk1@edoobox.com</div><div class=t style='left:2400.00px;top:670.00px;font-size:18.5px;line-height:22.20px;color:#1e1e1e;letter-spacing:1.188px;font-weight:400;'>Super administrator rights</div><div class=t style='left:1361.60px;top:712.97px;font-size:18.5px;line-height:22.20px;color:#1e1e1e;letter-spacing:1.250px;font-weight:400;'>Sabrina</div><div class=t style='left:1708.00px;top:712.97px;font-size:18.5px;line-height:22.20px;color:#1e1e1e;letter-spacing:0.820px;font-weight:400;'>Hauser</div><div class=t style='left:2053.50px;top:712.97px;font-size:18.5px;line-height:22.20px;color:#1e1e1e;letter-spacing:0.914px;font-weight:400;'>sh1@edoobox.com</div><div class=t style='left:2400.00px;top:712.97px;font-size:18.5px;line-height:22.20px;color:#1e1e1e;letter-spacing:1.100px;font-weight:400;'>Only limited leader rights</div><div class=t style='left:1362.60px;top:755.94px;font-size:18.5px;line-height:22.20px;color:#1e1e1e;letter-spacing:1.567px;font-weight:400;'>Jane</div><div class=t style='left:1708.00px;top:755.94px;font-size:18.5px;line-height:22.20px;color:#1e1e1e;letter-spacing:1.167px;font-weight:400;'>Cristen</div><div class=t style='left:2055.50px;top:755.94px;font-size:18.5px;line-height:22.20px;color:#1e1e1e;letter-spacing:1.253px;font-weight:400;'>jane@edoobox.com</div><div class=t style='left:2400.00px;top:755.94px;font-size:18.5px;line-height:22.20px;color:#1e1e1e;letter-spacing:1.188px;font-weight:400;'>Super administrator rights</div><div class=t style='left:1361.60px;top:798.91px;font-size:18.5px;line-height:22.20px;color:#1e1e1e;letter-spacing:1.383px;font-weight:400;'>Melanie</div><div class=t style='left:1709.00px;top:798.91px;font-size:18.5px;line-height:22.20px;color:#1e1e1e;letter-spacing:0.783px;font-weight:400;'>Aurelie</div><div class=t style='left:2053.50px;top:798.91px;font-size:18.5px;line-height:22.20px;color:#1e1e1e;letter-spacing:1.569px;font-weight:400;'>ma@edoobox.com</div><div class=t style='left:2401.00px;top:798.91px;font-size:18.5px;line-height:22.20px;color:#1e1e1e;letter-spacing:1.180px;font-weight:400;'>Administrator and leader rights</div><div class=t style='left:1218.00px;top:862.83px;font-size:15.5px;line-height:18.60px;color:#ffffff;letter-spacing:0.000px;font-weight:400;'>1</div><div class=t style='left:1426.60px;top:865.38px;font-size:18.4px;line-height:22.08px;color:#6b6b6b;letter-spacing:2.800px;font-weight:400;'>25</div><div class=t style='left:1561.30px;top:860.68px;font-size:18.4px;line-height:22.08px;color:#4a4a4a;letter-spacing:1.206px;font-weight:400;'>Einträge anzeigen</div><div class=t style='left:2457.70px;top:855.48px;font-size:18.4px;line-height:22.08px;color:#555555;letter-spacing:0.565px;font-weight:400;'>1 von 1 Seiten (7 Einträge)</div><div class=t style='left:639.00px;top:1451.40px;font-size:18.6px;line-height:22.32px;color:#2a2a2a;letter-spacing:0.325px;font-weight:400;'>können Sie die Administratoren Ihres Kontos und die Leiter Ihrer Kurse verwalten. Hier können Sie die Administratoren Ihres Kontos und die Leiter Ihrer Kurse.</div>
</body></html>
